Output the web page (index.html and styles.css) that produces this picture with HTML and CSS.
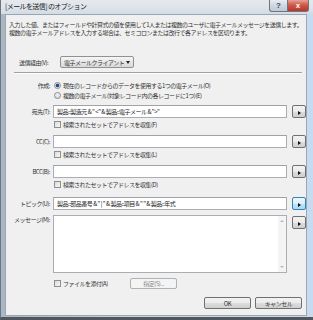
FILE: index.html
```html
<!DOCTYPE html>
<html lang="ja">
<head>
  <meta charset="UTF-8">
  <title>[メールを送信] のオプション</title>
  <link rel="stylesheet" href="styles.css">
</head>
<body>
  <div class="window">
    <div class="titlebar">
      <span class="title">[メールを送信] のオプション</span>
      <div class="caption-btns">
        <span class="cap-help">?</span>
        <span class="cap-close">x</span>
      </div>
    </div>

    <div class="client">
      <p class="intro">入力した値、またはフィールドや計算式の値を使用して1人または複数のユーザに電子メールメッセージを送信します。<br>複数の電子メールアドレスを入力する場合は、セミコロンまたは改行で各アドレスを区切ります。</p>

      <div class="send-row">
        <span class="send-label">送信経由(V):</span>
        <div class="select">
          <span>電子メールクライアント</span>
          <span class="select-arrow"></span>
        </div>
      </div>

      <div class="separator"></div>

      <div class="row radio-row first-radio">
        <span class="label">作成:</span>
        <label class="option"><span class="radio checked"></span>現在のレコードからのデータを使用する1つの電子メール(O)</label>
      </div>
      <div class="row radio-row">
        <span class="label"></span>
        <label class="option"><span class="radio"></span>複数の電子メール(対象レコード内の各レコードに1つ)(E)</label>
      </div>

      <div class="row field-row to-row">
        <span class="label">宛先(T):</span>
        <div class="field">製品::製造元 &amp; " &lt;" &amp; 製品::電子メール &amp; "&gt;"</div>
        <span class="spec-btn"><i></i></span>
      </div>
      <div class="row check-row">
        <span class="label"></span>
        <label class="option"><span class="check"></span>検索されたセットでアドレスを収集(F)</label>
      </div>

      <div class="row field-row">
        <span class="label">CC(C):</span>
        <div class="field"></div>
        <span class="spec-btn"><i></i></span>
      </div>
      <div class="row check-row">
        <span class="label"></span>
        <label class="option"><span class="check"></span>検索されたセットでアドレスを収集(L)</label>
      </div>

      <div class="row field-row">
        <span class="label">BCC(B):</span>
        <div class="field"></div>
        <span class="spec-btn"><i></i></span>
      </div>
      <div class="row check-row">
        <span class="label"></span>
        <label class="option"><span class="check"></span>検索されたセットでアドレスを収集(D)</label>
      </div>

      <div class="row field-row topic-row">
        <span class="label">トピック(U):</span>
        <div class="field">製品::部品番号 &amp; " | " &amp; 製品::項目 &amp; " " &amp; 製品::年式</div>
        <span class="spec-btn focused"><i></i></span>
      </div>

      <div class="row message-row">
        <span class="label">メッセージ(M):</span>
        <div class="textarea">
          <div class="text-body"></div>
          <div class="scrollbar">
            <span class="scroll-up"></span>
            <span class="scroll-down"></span>
          </div>
        </div>
        <span class="spec-btn"><i></i></span>
      </div>

      <div class="row attach-row">
        <span class="label"></span>
        <label class="option attach"><span class="check"></span>ファイルを添付(A)</label>
        <span class="btn disabled">指定(S)...</span>
      </div>

      <div class="footer">
        <span class="btn">OK</span>
        <span class="btn">キャンセル</span>
      </div>
    </div>
  </div>
</body>
</html>
```

FILE: styles.css
```css
/* Reset default styles */
* {
  margin: 0;
  padding: 0;
  box-sizing: border-box;
}

body {
  width: 313px;
  height: 320px;
  overflow: hidden;
  font-family: "Noto Sans CJK JP", "Liberation Sans", sans-serif;
  font-size: 6px;
  letter-spacing: -0.5px;
  color: #333;
  background: #fff;
}

/* Window frame */
.window {
  width: 313px;
  height: 320px;
  padding: 0 6px 1px 4px;
  background: linear-gradient(90deg, #a9b6c4 0%, #c9d4df 40%, #c7dbef 100%);
  border-bottom: 3px solid #52575e;
  border-left: 1px solid #6d7680;
}

.titlebar {
  height: 14px;
  display: flex;
  align-items: flex-start;
  justify-content: space-between;
  background: linear-gradient(180deg, #e6e9ee 0%, #dde3ea 60%, #d3dbe4 100%);
  margin: 0 -6px 0 -4px;
  padding-left: 4px;
}

.title {
  font-size: 7px;
  letter-spacing: -0.6px;
  line-height: 13px;
  color: #222;
}

.caption-btns {
  display: flex;
  margin-right: 4px;
}

.cap-help,
.cap-close {
  height: 12px;
  font-family: "Liberation Sans", sans-serif;
  font-weight: bold;
  font-size: 8px;
  letter-spacing: 0;
  line-height: 11px;
  text-align: center;
  border: 1px solid #6b7580;
  border-top: none;
}

.cap-help {
  width: 18px;
  color: #3d4a5a;
  background: linear-gradient(180deg, #e9edf2 0%, #cfd7e0 50%, #bfc9d4 100%);
  border-radius: 0 0 0 3px;
  border-right: none;
}

.cap-close {
  width: 22px;
  color: #fff;
  background: linear-gradient(180deg, #e3a394 0%, #d0584a 45%, #b8372a 100%);
  border-radius: 0 0 3px 0;
}

/* Dialog body */
.client {
  height: 302px;
  background: #f0f0f0;
  border: 1px solid #9aa6b3;
  padding: 6px 0 0 3px;
}

.intro {
  line-height: 8px;
  white-space: nowrap;
}

.send-row {
  display: flex;
  align-items: center;
  margin-top: 19px;
  height: 12px;
  padding-left: 10px;
}

.send-label {
  width: 41px;
}

.select {
  width: 74px;
  height: 12px;
  display: flex;
  align-items: center;
  justify-content: space-between;
  padding: 0 3px 0 3px;
  border: 1px solid #8e9297;
  border-radius: 2px;
  background: linear-gradient(180deg, #f6f6f6 0%, #e6e6e6 50%, #d9d9d9 100%);
}

.select-arrow {
  border-top: 3px solid #222;
  border-left: 2px solid transparent;
  border-right: 2px solid transparent;
}

.separator {
  margin: 4px 4px 0 5px;
  height: 2px;
  border-top: 1px solid #a0a0a0;
  border-bottom: 1px solid #fff;
}

/* Label / field rows */
.row {
  display: flex;
  align-items: center;
}

.label {
  width: 41px;
  flex-shrink: 0;
  text-align: right;
  margin-right: 3px;
  white-space: nowrap;
}

.option {
  display: flex;
  align-items: center;
  white-space: nowrap;
  margin-left: 1px;
}

.radio-row {
  height: 10px;
}

.first-radio {
  margin-top: 6px;
}

.radio {
  width: 7px;
  height: 7px;
  margin-right: 2px;
  border: 1px solid #8a8a8a;
  border-radius: 50%;
  background: linear-gradient(180deg, #f3f3f3, #dcdcdc);
}

.radio.checked {
  background: radial-gradient(circle, #244f8c 0 1.6px, #eef2f6 2.2px);
}

.check {
  width: 7px;
  height: 7px;
  margin-right: 2px;
  border: 1px solid #8e8f8f;
  background: linear-gradient(135deg, #dcdcdc, #f6f6f6);
}

.field-row {
  height: 13px;
  margin-top: 6px;
}

.to-row {
  margin-top: 5px;
}

.topic-row {
  margin-top: 8px;
}

.field {
  width: 236px;
  height: 13px;
  padding-left: 3px;
  line-height: 11px;
  white-space: nowrap;
  color: #222;
  background: #fff;
  border: 1px solid #abadb3;
  border-top-color: #9fa2a8;
}

.spec-btn {
  width: 14px;
  height: 13px;
  margin-left: 5px;
  display: flex;
  align-items: center;
  justify-content: center;
  padding-top: 2px;
  padding-left: 1px;
  border: 1px solid #707070;
  border-radius: 2px;
  background: linear-gradient(180deg, #f2f2f2 0%, #ebebeb 50%, #dddddd 51%, #cfcfcf 100%);
}

.spec-btn i {
  border-left: 3px solid #111;
  border-top: 2px solid transparent;
  border-bottom: 2px solid transparent;
}

.spec-btn.focused {
  border-color: #3c7fb1;
  background: linear-gradient(180deg, #eaf6fd 0%, #d9f0fc 50%, #bee6fd 51%, #a7d9f5 100%);
}

.check-row {
  height: 10px;
  margin-top: 1px;
}

/* Message box */
.message-row {
  align-items: flex-start;
  margin-top: 5px;
}

.message-row .label {
  line-height: 10px;
}

.message-row .spec-btn {
  margin-top: 1px;
}

.textarea {
  width: 236px;
  height: 58px;
  display: flex;
  border: 1px solid #abadb3;
  background: #fff;
}

.text-body {
  flex: 1;
}

.scrollbar {
  width: 8px;
  display: flex;
  flex-direction: column;
  justify-content: space-between;
  align-items: center;
  padding: 4px 0;
  background: #f4f4f4;
}

.scroll-up {
  border-bottom: 2px solid #b5b5b5;
  border-left: 2px solid transparent;
  border-right: 2px solid transparent;
}

.scroll-down {
  border-top: 2px solid #b5b5b5;
  border-left: 2px solid transparent;
  border-right: 2px solid transparent;
}

/* Attach row and buttons */
.attach-row {
  height: 11px;
  margin-top: 5px;
}

.attach {
  width: 76px;
}

.btn {
  display: flex;
  align-items: center;
  justify-content: center;
  width: 47px;
  height: 12px;
  border: 1px solid #707070;
  border-radius: 2px;
  background: linear-gradient(180deg, #f2f2f2 0%, #ebebeb 50%, #dddddd 51%, #cfcfcf 100%);
  white-space: nowrap;
}

.btn.disabled {
  height: 11px;
  color: #8d8d8d;
  border-color: #adb2b5;
  background: #f4f4f4;
}

.footer {
  display: flex;
  justify-content: flex-end;
  gap: 4px;
  margin-top: 8px;
  padding-right: 4px;
}
```
